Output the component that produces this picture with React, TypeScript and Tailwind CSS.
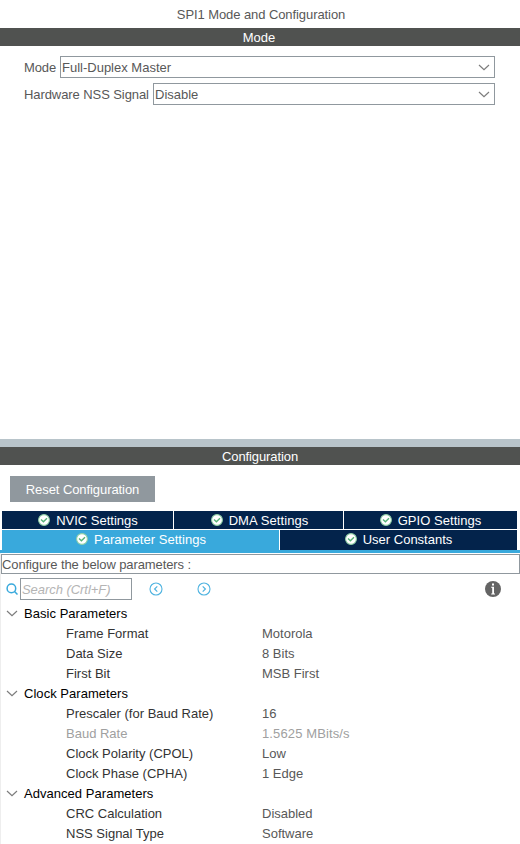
import React from "react";

const Chevron = () => (
  <svg className="h-[7px] w-[12px] shrink-0" viewBox="0 0 12 7" fill="none" stroke="#7c7c7c" strokeWidth="1.2">
    <path d="M1 1 L6 5.7 L11 1" />
  </svg>
);

const Check = () => (
  <svg className="h-3 w-3 shrink-0" viewBox="0 0 12 12">
    <circle cx="6" cy="6" r="5.4" fill="#fff" stroke="#8fd0a6" strokeWidth="1.1" />
    <path d="M3 5.6 L5.4 7.8 L9 4.2" fill="none" stroke="#55b277" strokeWidth="1.4" />
  </svg>
);

const Arrow = ({ d }: { d: string }) => (
  <svg className="h-[14px] w-[14px] shrink-0" viewBox="0 0 14 14" fill="none" stroke="#4fb3e0">
    <circle cx="7" cy="7" r="6" strokeWidth="1.1" />
    <path d={d} strokeWidth="1.2" />
  </svg>
);

function Select({ label, value, className }: { label: string; value: string; className: string }) {
  return (
    <div className="flex h-[22px] items-center">
      <span className={"shrink-0 pt-0.5 " + className}>{label}</span>
      <div className="flex h-full flex-1 items-center justify-between border border-[#90989e] pl-px pr-1">
        <span className="pt-0.5">{value}</span>
        <Chevron />
      </div>
    </div>
  );
}

function Tab({ label, className }: { label: string; className: string }) {
  return (
    <div className={"flex items-center justify-center gap-1.5 text-white " + className}>
      <Check />
      <span className="pt-px leading-[18px]">{label}</span>
    </div>
  );
}

type Row = [string, string, boolean?];
const groups: { title: string; rows: Row[] }[] = [
  { title: "Basic Parameters", rows: [["Frame Format", "Motorola"], ["Data Size", "8 Bits"], ["First Bit", "MSB First"]] },
  {
    title: "Clock Parameters",
    rows: [
      ["Prescaler (for Baud Rate)", "16"],
      ["Baud Rate", "1.5625 MBits/s", true],
      ["Clock Polarity (CPOL)", "Low"],
      ["Clock Phase (CPHA)", "1 Edge"],
    ],
  },
  { title: "Advanced Parameters", rows: [["CRC Calculation", "Disabled"], ["NSS Signal Type", "Software"]] },
];

export default function App() {
  return (
    <div className="flex h-[844px] w-[520px] flex-col overflow-hidden whitespace-nowrap bg-white font-['Liberation_Sans',Arial,sans-serif] text-[13px] leading-5 text-[#585858]">
      <div className="h-7 pl-0.5 pt-[5px] text-center tracking-[-0.08px]">SPI1 Mode and Configuration</div>
      <div className="h-[18px] bg-[#505250] pt-px text-center leading-[18px] text-white">
        <span className="pr-0.5">Mode</span>
      </div>
      <div className="flex h-[393px] flex-col gap-[5px] pl-6 pr-[25px] pt-2.5">
        <Select label="Mode" value="Full-Duplex Master" className="w-9 tracking-[-0.1px]" />
        <Select label="Hardware NSS Signal" value="Disable" className="w-[129px] tracking-[-0.08px]" />
      </div>
      <div className="h-2 bg-[#b8c4ca]" />
      <div className="h-[18px] bg-[#505250] pt-px text-center leading-[18px] tracking-[-0.1px] text-white">
        Configuration
      </div>
      <div className="h-[46px] pl-2.5 pt-[11px]">
        <button className="block h-[26px] w-[145px] bg-[#90989e] pt-0.5 text-center tracking-[-0.08px] text-white">
          Reset Configuration
        </button>
      </div>
      <div className="flex h-[18px] gap-px pl-0.5">
        <Tab label="NVIC Settings" className="w-[171px] bg-[#03234b] pl-px" />
        <Tab label="DMA Settings" className="w-[169px] bg-[#03234b] pl-[2px] tracking-[0.08px]" />
        <Tab label="GPIO Settings" className="w-[173px] bg-[#03234b] tracking-[0.05px]" />
      </div>
      <div className="mt-px flex h-5 gap-px pl-0.5">
        <Tab label="Parameter Settings" className="w-[277px] bg-[#39a9dc] pb-[2px] pl-px tracking-[0.05px]" />
        <Tab label="User Constants" className="w-[237px] bg-[#03234b] pb-[2px]" />
      </div>
      <div className="h-[3px] bg-[#39a9dc]" />
      <div className="flex flex-1 flex-col border-l border-[#eeeeee] pt-px">
        <div className="h-5 border border-[#90989e] leading-[19px] tracking-[-0.1px]">Configure the below parameters :</div>
        <div className="mt-1 flex h-[22px] items-center pl-[5px]">
          <svg className="mr-0.5 h-3 w-3" viewBox="0 0 12 12" fill="none" stroke="#39a9dc" strokeWidth="1.5">
            <circle cx="5.4" cy="5.4" r="4.3" />
            <path d="M8.3 8.3 L11.5 11.5" />
          </svg>
          <div className="h-[22px] w-[112px] border border-[#90989e] pl-px pt-px italic tracking-[-0.05px] text-[#b4b4b4]">
            Search (Crtl+F)
          </div>
          <div className="flex gap-[34px] pl-[17px]">
            <Arrow d="M8.3 4.3 L5.6 7 L8.3 9.7" />
            <Arrow d="M5.7 4.3 L8.4 7 L5.7 9.7" />
          </div>
          <svg className="ml-auto mr-[19px] h-4 w-4" viewBox="0 0 16 16">
            <circle cx="8" cy="8" r="8" fill="#646464" />
            <path d="M7 2.6h2v2H7z M6.2 5.8h2.8v6.6h1v1H6.2v-1h1V6.8h-1z" fill="#fff" />
          </svg>
        </div>
        <div className="flex flex-col pt-[3px]">
          {groups.map((g) => (
            <div key={g.title}>
              <div className="flex h-5 items-center gap-[6px] pl-[5px] tracking-[0.04px] text-black">
                <Chevron />
                <span className="pt-0.5">{g.title}</span>
              </div>
              {g.rows.map(([name, value, disabled]) => (
                <div key={name} className={"flex h-5 pl-[65px] pt-px " + (disabled ? "text-[#a0a0a0]" : "")}>
                  <span className={"w-[196px] " + (disabled ? "" : "text-[#333333]")}>{name}</span>
                  <span className={disabled ? "tracking-[0.12px]" : ""}>{value}</span>
                </div>
              ))}
            </div>
          ))}
        </div>
      </div>
    </div>
  );
}
